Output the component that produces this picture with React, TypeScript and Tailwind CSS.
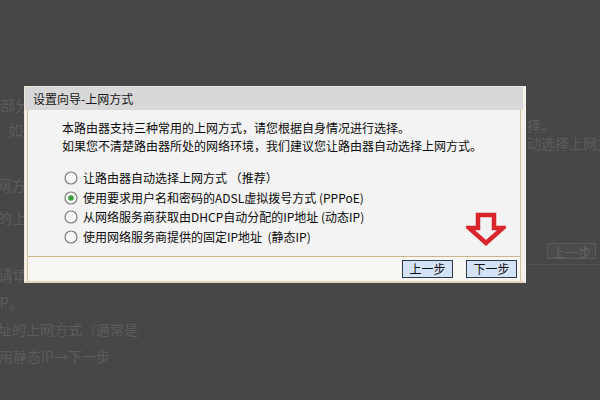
const cjk = "font-['Noto_Sans_CJK_SC','Noto_Sans',sans-serif]";

const options = [
  "让路由器自动选择上网方式 （推荐）",
  "使用要求用户名和密码的ADSL虚拟拨号方式 (PPPoE)",
  "从网络服务商获取由DHCP自动分配的IP地址 (动态IP)",
  "使用网络服务商提供的固定IP地址  (静态IP)",
];

function Radio({ checked }: { checked: boolean }) {
  return (
    <svg width="14" height="14" viewBox="0 0 14 14" className="shrink-0">
      <circle cx="7" cy="7" r="6" fill="#f7f7f7" stroke="#7d7d7d" strokeWidth="1.2" />
      {checked && <circle cx="7" cy="7" r="2.8" fill="#3a9f3a" />}
    </svg>
  );
}

function DownArrow() {
  return (
    <svg width="40" height="35" viewBox="0 0 40 35" className="absolute left-[441px] top-[125px]">
      <path
        d="M12 3 H28 V16 H37 L20 31 L3 16 H12 Z"
        fill="none"
        stroke="#d8262c"
        strokeWidth="4.5"
        strokeLinejoin="miter"
      />
    </svg>
  );
}

function WizardButton({ label }: { label: string }) {
  return (
    <button className="flex h-[18px] w-[51px] items-center justify-center border border-[#2c3947] bg-[#d3e2f4] text-[12px] leading-none text-[#111]">
      {label}
    </button>
  );
}

function BackgroundPage() {
  return (
    <div className="flex text-[15px] leading-none text-[#5c5c5c]">
      <div className="flex w-[527px] shrink-0 flex-col whitespace-nowrap">
        <div className="ml-[-15px] mt-[97px] h-[15px]">置部分</div>
        <div className="ml-[8px] mt-[10px] h-[15px]">如果</div>
        <div className="ml-[-4px] mt-[40px] h-[15px]">网方式</div>
        <div className="ml-[-3px] mt-[18px] h-[15px]">的上网</div>
        <div className="ml-[-2px] mt-[42px] h-[15px]">请填写</div>
        <div className="ml-[-5px] mt-[12px] h-[15px]">IP。</div>
        <div className="ml-[-2px] mt-[13px] h-[15px] text-[14px]">址的上网方式（通常是</div>
        <div className="ml-[-1px] mt-[12px] h-[15px] text-[14px]">用静态IP→下一步</div>
      </div>
      <div className="flex min-w-0 flex-1 flex-col overflow-hidden whitespace-nowrap text-[14px]">
        <div className="mt-[118px] h-[14px]">择。</div>
        <div className="mt-[4px] h-[14px]">动选择上网方式</div>
        <div className="ml-[20px] mt-[93px] flex h-[16px] w-[49px] items-center justify-center border border-[#5a5a5a] bg-[#4b4b4b] text-[13px] text-[#626262]">
          上一步
        </div>
        <div className="mt-[5px] border-t border-[#525252]" />
      </div>
    </div>
  );
}

export default function App() {
  return (
    <div className={`relative h-[400px] w-[600px] overflow-hidden bg-[#474747] ${cjk}`}>
      <BackgroundPage />

      <div className="absolute left-[24px] top-[86px] flex h-[197px] w-[502px] flex-col border-l border-t border-[#efe7d9] border-r-[3px] border-r-[#f4f0ea] border-b-2 border-b-[#e4d6bd] bg-[#f6f1e8]">
        <div className="flex h-[23px] items-center bg-[#d8d8d8] pl-[8px] text-[12px] text-[#161616]">
          设置向导-上网方式
        </div>
        <div className="mx-[2px] flex flex-1 flex-col border-x border-[#d6c09c]">
          <div className="h-[146px] bg-[#f3f3f3] pl-[34px] pt-[9px] text-[12px] leading-[18px] text-[#0a0a0a]">
            <p>本路由器支持三种常用的上网方式，请您根据自身情况进行选择。</p>
            <p>如果您不清楚路由器所处的网络环境，我们建议您让路由器自动选择上网方式。</p>
            <div className="mt-[13px] flex flex-col">
              {options.map((o, i) => (
                <label key={o} className="flex h-[19.7px] items-center gap-[5px] pl-[2px] whitespace-pre">
                  <Radio checked={i === 1} />
                  <span>{o}</span>
                </label>
              ))}
            </div>
          </div>
          <div className="border-t border-[#cdb48c]" />
          <div className="flex flex-1 items-center justify-end gap-[13px] bg-[#f8f6f2] pr-[3px]">
            <WizardButton label="上一步" />
            <WizardButton label="下一步" />
          </div>
        </div>
        <DownArrow />
      </div>
    </div>
  );
}
